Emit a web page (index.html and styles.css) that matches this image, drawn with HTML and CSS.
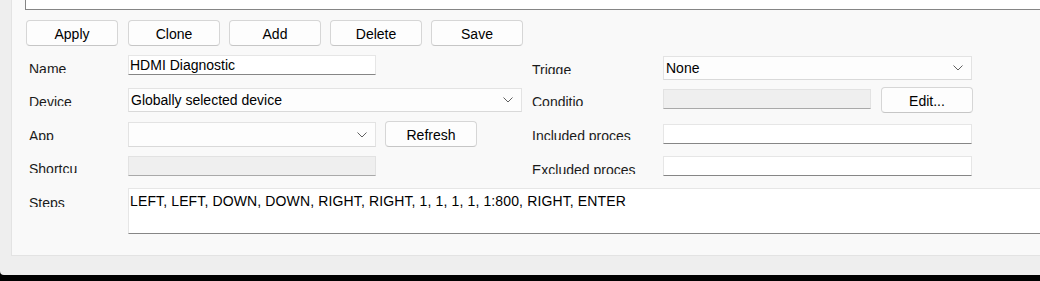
FILE: index.html
```html
<!DOCTYPE html>
<html lang="en">

<head>
  <meta charset="UTF-8">
  <meta name="viewport" content="width=device-width, initial-scale=1.0">
  <title>Macro editor</title>
  <link rel="stylesheet" href="styles.css">
</head>

<body>
  <div class="window">
    <div class="panel">
      <div class="topbox"></div>

      <div class="toolbar">
        <button class="btn">Apply</button>
        <button class="btn">Clone</button>
        <button class="btn">Add</button>
        <button class="btn">Delete</button>
        <button class="btn">Save</button>
      </div>

      <div class="form">
        <!-- row 1 -->
        <div class="lbl tight r1">Name</div>
        <input class="txt r1 c-name" type="text" value="HDMI Diagnostic">
        <div class="lbl lbl2 r1">Trigge</div>
        <div class="combo r1 c-right">
          <span>None</span>
          <svg class="chev" width="10" height="6" viewBox="0 0 10 6"><path d="M0.5 0.5 L5 5 L9.5 0.5" /></svg>
        </div>

        <!-- row 2 -->
        <div class="lbl r2">Device</div>
        <div class="combo r2 c-device">
          <span>Globally selected device</span>
          <svg class="chev" width="10" height="6" viewBox="0 0 10 6"><path d="M0.5 0.5 L5 5 L9.5 0.5" /></svg>
        </div>
        <div class="lbl lbl2 r2">Conditio</div>
        <div class="pair r2 c-right">
          <div class="off cond"></div>
          <button class="btn edit">Edit...</button>
        </div>

        <!-- row 3 -->
        <div class="lbl r3">App</div>
        <div class="combo r3 c-name app">
          <span></span>
          <svg class="chev" width="10" height="6" viewBox="0 0 10 6"><path d="M0.5 0.5 L5 5 L9.5 0.5" /></svg>
        </div>
        <button class="btn r3 refresh">Refresh</button>
        <div class="lbl lbl2 r3">Included proces</div>
        <input class="txt r3 c-right incl" type="text" value="">

        <!-- row 4 -->
        <div class="lbl tight r4">Shortcu</div>
        <div class="off r4 c-name short"></div>
        <div class="lbl lbl2 r4">Excluded proces</div>
        <input class="txt r4 c-right excl" type="text" value="">

        <!-- row 5 -->
        <div class="lbl r5">Steps</div>
        <div class="steps r5">LEFT, LEFT, DOWN, DOWN, RIGHT, RIGHT, 1, 1, 1, 1, 1:800, RIGHT, ENTER</div>
      </div>
    </div>
  </div>
</body>

</html>
```

FILE: styles.css
```css
html,
body {
  margin: 0;
  height: 281px;
  overflow: hidden;
  background: #000;
  font-family: "Liberation Sans", Arial, sans-serif;
  font-size: 14px;
  color: #000;
}

/* window frame */
.window {
  height: 275px;
  box-sizing: border-box;
  background: #eeeeee;
  padding: 0 0 19px 11px;
  border-bottom-left-radius: 4px;
}

.panel {
  height: 256px;
  box-sizing: border-box;
  background: #f9f9f9;
  border-left: 1px solid #e3e3e3;
  border-bottom: 1px solid #e3e3e3;
  padding-left: 13px;
  overflow: hidden;
}

.topbox {
  height: 10px;
  box-sizing: border-box;
  background: #fff;
  border-left: 1px solid #858585;
  border-bottom: 1px solid #858585;
  margin-right: -10px;
}

/* buttons */
.toolbar {
  display: flex;
  gap: 9px;
  margin: 10px 0 0 1px;
}

.toolbar .btn:first-child {
  margin-right: 1px;
}

.btn {
  width: 92px;
  height: 26px;
  box-sizing: border-box;
  padding: 1px 0 0;
  background: #fdfdfd;
  border: 1px solid #d6d6d6;
  border-bottom-color: #c6c6c6;
  border-radius: 4px;
  font-family: inherit;
  font-size: 14px;
  color: #000;
}

/* form grid */
.form {
  display: grid;
  grid-template-columns: 103px 248px 9px 92px 45px 9px 132px 309px 120px;
  grid-template-rows: 32px 34px 34px 33px 46px;
  align-items: start;
  margin-top: 9px;
  width: 1100px;
}

.r1 { grid-row: 1; }
.r2 { grid-row: 2; }
.r3 { grid-row: 3; }
.r4 { grid-row: 4; }
.r5 { grid-row: 5; }

.lbl {
  grid-column: 1;
  margin-top: 7px;
  height: 12px;
  line-height: 16px;
  overflow: hidden;
  padding-left: 4px;
  color: #1b1b1b;
  white-space: nowrap;
}

.lbl.tight {
  margin-top: 6px;
}

.lbl2 {
  grid-column: 7;
  padding-left: 1px;
}

.c-name { grid-column: 2; }
.c-device { grid-column: 2 / 6; }
.c-right { grid-column: 8; }

.txt {
  height: 20px;
  box-sizing: border-box;
  margin: 0;
  padding: 0 1px;
  background: #fff;
  border: 1px solid #e6e6e6;
  border-bottom-color: #868686;
  font-family: inherit;
  font-size: 14px;
  color: #000;
  outline: none;
  width: 100%;
}

.txt.incl { margin-top: 3px; }
.txt.excl { margin-top: 1px; }

.combo {
  display: flex;
  align-items: center;
  justify-content: space-between;
  height: 24px;
  box-sizing: border-box;
  margin-top: 1px;
  padding: 0 8px 0 2px;
  background: #fdfdfd;
  border: 1px solid #e3e3e3;
  border-bottom-color: #d9d9d9;
}

.combo.app {
  height: 25px;
}

.chev {
  fill: none;
  stroke: #606060;
  stroke-width: 1;
}

.off {
  height: 20px;
  box-sizing: border-box;
  background: #efefef;
  border: 1px solid #e2e2e2;
  border-bottom-color: #a9a9a9;
}

.short { margin-top: 1px; }

.pair {
  display: flex;
  gap: 10px;
  width: 310px;
}

.cond {
  flex: 1;
  margin-top: 2px;
}

.refresh {
  grid-column: 4;
}

.steps {
  grid-column: 2 / 10;
  height: 46px;
  box-sizing: border-box;
  padding: 2px 1px;
  line-height: 20px;
  letter-spacing: 0.13px;
  background: #fff;
  border: 1px solid #e6e6e6;
  border-bottom-color: #868686;
  white-space: nowrap;
}
```
